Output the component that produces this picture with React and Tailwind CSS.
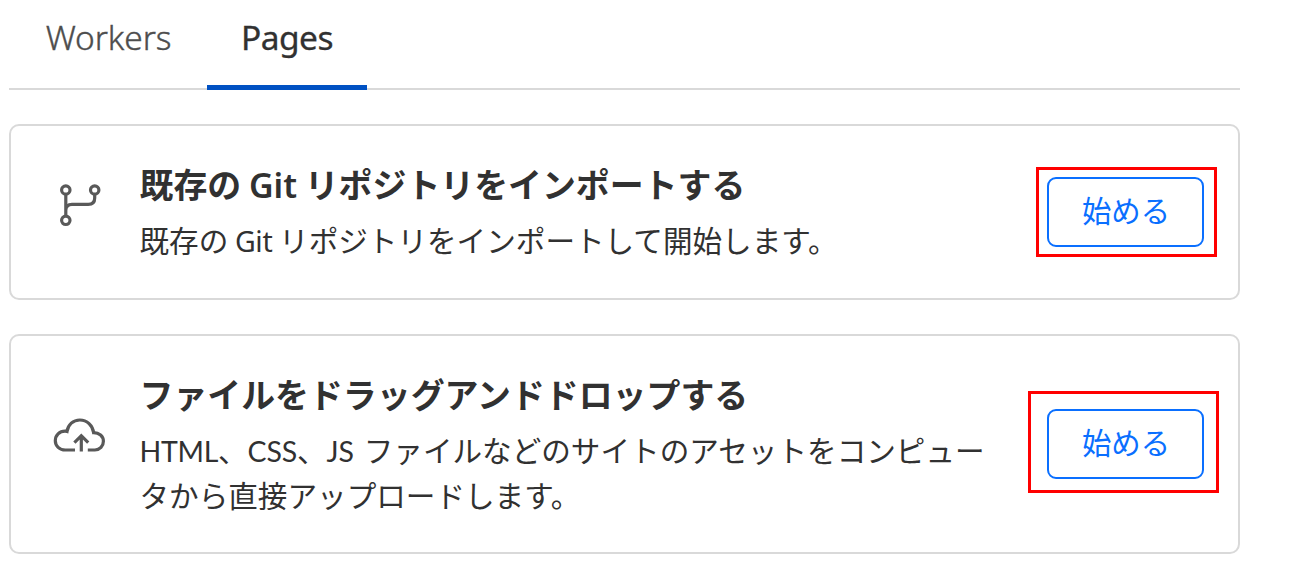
import { useState } from 'react';

const tabs = ['Workers', 'Pages'];

function BranchIcon() {
    return (
        <svg className="h-[52px] w-[52px]" viewBox="0 0 52 52" fill="none" stroke="#595959" strokeWidth="3.2">
            <circle cx="12.8" cy="11" r="4.2" />
            <circle cx="41.7" cy="11" r="4.2" />
            <circle cx="12.8" cy="41.3" r="4.2" />
            <path d="M12.8 15.2V37.1M12.8 31.5C12.8 27.5 15 25.4 19 25.4H35.2C39.5 25.4 41.7 23 41.7 19V15.2" />
        </svg>
    );
}

function CloudIcon() {
    return (
        <svg className="mb-[3px] h-[52px] w-[52px]" viewBox="0 0 52 52" fill="none" stroke="#595959" strokeWidth="3.2">
            <path d="M22 41H12.3C6.5 41 2.3 37 2.3 31.8C2.3 26.4 6.5 22.2 12 22.2C12.7 22.2 13.3 22.2 14 22.4C15 15.6 20.2 11 26.8 11C34 11 39.7 16.3 40.6 23.6C46.1 23.6 50.4 27.2 50.4 32.3C50.4 37.2 46.8 41 41.9 41H34.8" />
            <path d="M28.3 42.5V27M21.4 33.6L28.3 26.7L35.2 33.6" />
        </svg>
    );
}

function StartButton({ outline }) {
    return (
        <div className="relative">
            <button className="block h-[70px] w-[157px] rounded-[9px] border-2 border-[#0a6fff] pb-[5px] pl-[1px] text-[29.4px] leading-none text-[#0a6fff]">
                始める
            </button>
            <span className={`pointer-events-none absolute border-3 border-[#ff0000] ${outline}`} />
        </div>
    );
}

function Card({ icon, title, children, className, outline }) {
    return (
        <div className={`flex items-center rounded-[10px] border-2 border-[#d9d9d9] pl-[42px] pr-[34px] ${className}`}>
            <div className="mb-[15px] w-[86.5px] shrink-0">{icon}</div>
            <div className="w-[870px] shrink-0 self-start pt-[32px] whitespace-nowrap">
                <h2 className="text-[33.9px] leading-[51px] font-bold">{title}</h2>
                <p className="mt-[8px] text-[29.6px] leading-[45px]">{children}</p>
            </div>
            <div className="ml-auto">
                <StartButton outline={outline} />
            </div>
        </div>
    );
}

function App() {
    const [active, setActive] = useState('Pages');

    return (
        <div className="h-[586px] overflow-hidden bg-white pl-[9px] font-['Noto_Sans_CJK_JP',sans-serif] text-[#313131]">
            <div className="w-[1231px]">
                <div className="flex h-[90px] border-b-2 border-[#d9d9d9]">
                    {tabs.map((tab) => (
                        <button
                            key={tab}
                            onClick={() => setActive(tab)}
                            className={
                                tab === active
                                    ? "-mb-[2px] h-[90px] w-[160px] border-b-5 border-[#0051c3] pb-[10px] font-['Noto_Sans'] text-[33.5px] tracking-[-0.5px] [-webkit-text-stroke:0.3px]"
                                    : "h-[90px] w-[198px] pb-[15px] pl-[1px] font-['Noto_Sans'] text-[33.5px] font-light tracking-[-0.1px] text-[#4d4d4d] [-webkit-text-stroke:0.4px]"
                            }
                        >
                            {tab}
                        </button>
                    ))}
                </div>
                <Card
                    className="mt-[34px] h-[176px]"
                    icon={<BranchIcon />}
                    outline="-top-[10px] -left-[11px] h-[90px] w-[181px]"
                    title={
                        <>
                            既存の <span className="font-['Noto_Sans'] text-[34px] leading-none font-semibold">Git</span>{' '}
                            リポジトリをインポートする
                        </>
                    }
                >
                    既存の <span className="font-['Noto_Sans'] text-[28.5px] leading-none tracking-[-0.3px]">Git</span>{' '}
                    リポジトリをインポートして開始します。
                </Card>
                <Card
                    className="mt-[34px] h-[220px]"
                    icon={<CloudIcon />}
                    outline="-top-[18px] -left-[19px] h-[102px] w-[191px]"
                    title="ファイルをドラッグアンドドロップする"
                >
                    <span className="font-[Lato] text-[28.5px] leading-none tracking-[-0.3px]">HTML</span>、
                    <span className="font-[Lato] text-[28.5px] leading-none tracking-[-0.2px]">CSS</span>、
                    <span className="mr-[3px] font-[Lato] text-[28.5px] leading-none">JS</span>{' '}
                    ファイルなどのサイトのアセットをコンピュー
                    <br />
                    タから直接アップロードします。
                </Card>
            </div>
        </div>
    );
}

export default App;
